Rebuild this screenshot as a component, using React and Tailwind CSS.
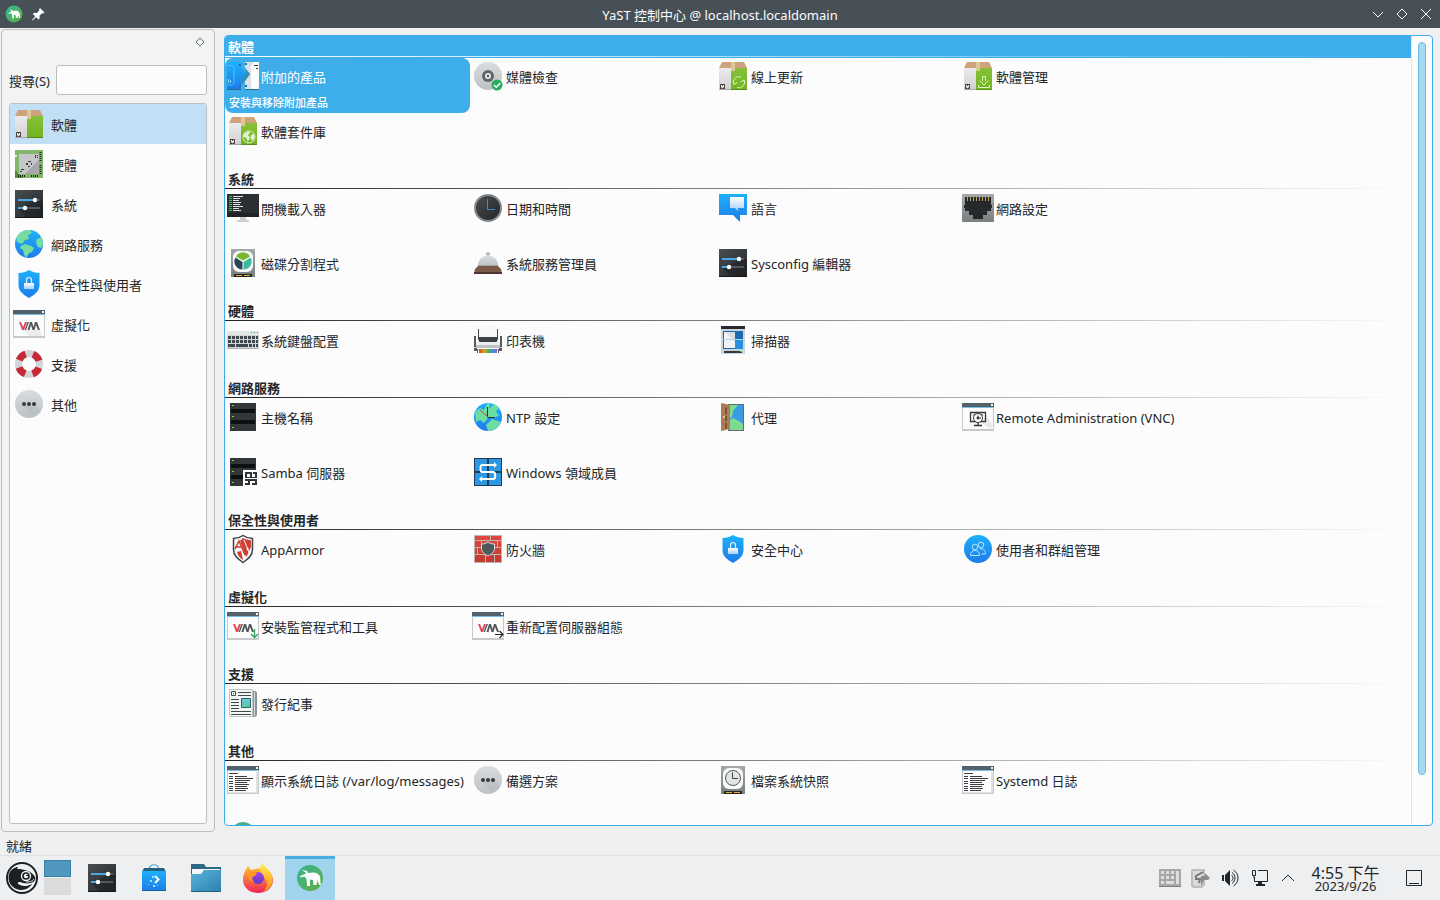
import { useState } from 'react'

const categories = [
  { label: '軟體', icon: PackageIcon },
  { label: '硬體', icon: ChipIcon },
  { label: '系統', icon: SlidersIcon },
  { label: '網路服務', icon: GlobeIcon },
  { label: '保全性與使用者', icon: ShieldIcon },
  { label: '虛擬化', icon: VmIcon },
  { label: '支援', icon: LifebuoyIcon },
  { label: '其他', icon: DotsIcon },
]

const sections = [
  {
    title: '軟體',
    items: [
      { label: '附加的產品', icon: AddonIcon, hint: '安裝與移除附加產品' },
      { label: '媒體檢查', icon: MediaIcon },
      { label: '線上更新', icon: UpdateIcon },
      { label: '軟體管理', icon: InstallIcon },
      { label: '軟體套件庫', icon: RepoIcon },
    ],
  },
  {
    title: '系統',
    items: [
      { label: '開機載入器', icon: BootIcon },
      { label: '日期和時間', icon: ClockIcon },
      { label: '語言', icon: LanguageIcon },
      { label: '網路設定', icon: EthernetIcon },
      { label: '磁碟分割程式', icon: PartitionIcon },
      { label: '系統服務管理員', icon: BellIcon },
      { label: 'Sysconfig 編輯器', icon: SlidersIcon },
    ],
  },
  {
    title: '硬體',
    items: [
      { label: '系統鍵盤配置', icon: KeyboardIcon },
      { label: '印表機', icon: PrinterIcon },
      { label: '掃描器', icon: ScannerIcon },
    ],
  },
  {
    title: '網路服務',
    items: [
      { label: '主機名稱', icon: ServerIcon },
      { label: 'NTP 設定', icon: NtpIcon },
      { label: '代理', icon: ProxyIcon },
      { label: 'Remote Administration (VNC)', icon: VncIcon },
      { label: 'Samba 伺服器', icon: SambaIcon },
      { label: 'Windows 領域成員', icon: DomainIcon },
    ],
  },
  {
    title: '保全性與使用者',
    items: [
      { label: 'AppArmor', icon: ArmorIcon },
      { label: '防火牆', icon: FirewallIcon },
      { label: '安全中心', icon: ShieldIcon },
      { label: '使用者和群組管理', icon: UsersIcon },
    ],
  },
  {
    title: '虛擬化',
    items: [
      { label: '安裝監管程式和工具', icon: VmInstallIcon },
      { label: '重新配置伺服器組態', icon: VmMoveIcon },
    ],
  },
  { title: '支援', items: [{ label: '發行紀事', icon: NewsIcon }] },
  {
    title: '其他',
    items: [
      { label: '顯示系統日誌 (/var/log/messages)', icon: LogIcon },
      { label: '備選方案', icon: DotsIcon },
      { label: '檔案系統快照', icon: SnapshotIcon },
      { label: 'Systemd 日誌', icon: LogIcon },
      { label: 'YaST', icon: YastIcon, iconOnly: true },
    ],
  },
]

export default function App() {
  const [category, setCategory] = useState('軟體')
  const [selected, setSelected] = useState('附加的產品')

  return (
    <div className="flex h-screen flex-col overflow-hidden bg-[#eff0f1] font-['Noto_Sans','Noto_Sans_CJK_TC',sans-serif] text-[13px] leading-5 text-[#232629]">
      <Gradients />
      <TitleBar />
      <div className="flex min-h-0 flex-1">
        <aside className="ml-px mt-px flex w-[214px] shrink-0 flex-col rounded border border-[#bcbec0] bg-[#f2f3f3] px-[7px] pb-[7px]">
          <div className="flex h-[35px] justify-end pr-[2px] pt-[7px]">
            <button aria-label="Float panel" className="h-[10px] w-[10px]">
              <svg viewBox="0 0 10 10" className="h-full w-full" fill="none" stroke="#6b6f72">
                <path d="M5 1l4 4-4 4-4-4z" />
              </svg>
            </button>
          </div>
          <div className="flex items-center gap-[6px]">
            <label htmlFor="search" className="mt-0.5">搜尋(S)</label>
            <input
              id="search"
              type="text"
              className="h-[30px] min-w-0 flex-1 rounded-[3px] border border-[#bcbec0] bg-[#fcfcfc] px-2 outline-none"
            />
          </div>
          <nav className="mt-2 flex-1 rounded-[3px] border border-[#bcbec0] bg-[#fcfcfc]">
            {categories.map(({ label, icon: Icon }) => (
              <button
                key={label}
                onClick={() => setCategory(label)}
                className={`flex h-10 w-full items-center gap-[6px] pl-[3px] text-left ${
                  category === label ? 'bg-[#c2e0f5]' : ''
                }`}
              >
                <Icon />
                <span className="mt-0.5">{label}</span>
              </button>
            ))}
          </nav>
        </aside>

        <main className="mb-[6px] ml-[9px] mr-[7px] mt-[7px] flex min-w-0 flex-1 overflow-hidden rounded border border-[#3daee9] bg-[#fcfcfc]">
          <div className="min-w-0 flex-1 overflow-hidden">
            {sections.map(({ title, items }) => {
              const active = title === category
              return (
                <section key={title}>
                  <div className={active ? 'h-[22px] bg-[#3daee9] text-white' : 'h-[22px]'}>
                    <h2 className="h-5 pl-[3px] pt-px font-bold">{title}</h2>
                    <div
                      className={`h-px bg-linear-to-r to-transparent ${active ? 'from-white' : 'from-[#232629]'}`}
                    />
                  </div>
                  <div className="grid grid-cols-[repeat(auto-fill,245px)]">
                    {items.map((item) => (
                      <Module
                        key={item.label}
                        {...item}
                        selected={selected === item.label}
                        onSelect={() => setSelected(item.label)}
                      />
                    ))}
                  </div>
                </section>
              )
            })}
          </div>
          <div className="flex w-[21px] shrink-0 border-l border-[#e3e5e6] px-[6px] pb-[50px] pt-[6px]">
            <div className="w-2 rounded-full border border-[#6cbfe9] bg-[#a9d8f1]" />
          </div>
        </main>
      </div>
      <div className="h-[23px] shrink-0 px-[6px] pt-1">就緒</div>
      <Taskbar />
    </div>
  )
}

function Module({ label, icon: Icon, hint, iconOnly, selected, onSelect }) {
  return (
    <button
      onClick={onSelect}
      aria-label={iconOnly ? label : undefined}
      className={`flex h-[55px] flex-col overflow-hidden whitespace-nowrap rounded-lg px-[2px] pt-[2px] text-left ${
        selected ? 'bg-[#3daee9] text-white' : ''
      }`}
    >
      <span className="flex h-8 items-center gap-[2px]">
        <Icon />
        {!iconOnly && <span className="mt-0.5">{label}</span>}
      </span>
      {selected && hint && <span className="mt-px px-[2px] text-[11px] font-medium">{hint}</span>}
    </button>
  )
}

function TitleBar() {
  return (
    <header className="grid h-7 shrink-0 grid-cols-[1fr_auto_1fr] items-center bg-[#475057] text-[#fcfcfc]">
      <div className="flex items-center gap-[7px] pl-[5px]">
        <svg viewBox="0 0 32 32" className="h-[18px] w-[18px]">
          <circle cx="16" cy="16" r="15" fill="url(#yast)" />
          <Aardvark />
        </svg>
        <button aria-label="Pin" className="h-4 w-4">
          <svg viewBox="0 0 16 16" className="h-full w-full" fill="#fcfcfc">
            <path d="M10 2l4.500 4.500-1.500 1-1-.3-2.500 2.500.2 2.600L8.500 13.500 6.200 11.200 2.500 14.500 2 14l3.200-3.800L2.800 8 4 6.800l2.800.2 2.500-2.500L9 3.500z" />
          </svg>
        </button>
      </div>
      <h1 className="mt-0.5">YaST 控制中心 @ localhost.localdomain</h1>
      <div className="flex justify-end gap-3 pr-2">
        <button aria-label="Minimize" className="h-3 w-3">
          <WindowGlyph d="M1 4l5 5 5-5" />
        </button>
        <button aria-label="Maximize" className="h-3 w-3">
          <WindowGlyph d="M6 1l5 5-5 5-5-5z" />
        </button>
        <button aria-label="Close" className="h-3 w-3">
          <WindowGlyph d="M1 1l10 10M11 1L1 11" />
        </button>
      </div>
    </header>
  )
}

function WindowGlyph({ d }) {
  return (
    <svg viewBox="0 0 12 12" className="h-full w-full" fill="none" stroke="#fcfcfc">
      <path d={d} />
    </svg>
  )
}

function Taskbar() {
  return (
    <footer className="flex h-[45px] shrink-0 items-stretch border-t border-[#dfe1e2] bg-[#edeff0]">
      <button aria-label="Menu" className="flex w-11 items-center justify-center">
        <ChameleonIcon />
      </button>
      <div className="flex w-[27px] flex-col gap-px pt-1">
        <button aria-label="Desktop 1" className="h-[17px] border border-[#3b7fa6] bg-[#5097bd]" />
        <button aria-label="Desktop 2" className="h-[17px] bg-[#d9dbdc]" />
      </div>
      <div className="ml-[5px] flex">
        <TaskButton label="System Settings"><SlidersIcon /></TaskButton>
        <TaskButton label="Discover"><DiscoverIcon /></TaskButton>
        <TaskButton label="Files"><FolderIcon /></TaskButton>
        <TaskButton label="Firefox"><FirefoxIcon /></TaskButton>
        <button
          aria-label="YaST"
          className="ml-px flex w-[50px] items-center justify-center border-t-3 border-[#4cade3] bg-[#a0d3ec] pb-[3px]"
        >
          <YastIcon />
        </button>
      </div>
      <div className="ml-auto flex items-center pr-[18px]">
        <div className="flex items-center gap-2">
          <svg viewBox="0 0 22 22" className="h-[22px] w-[22px]">
            <path d="M0 2h22v18H0z" fill="#a7a7a7" />
            <path d="M2 4h3v3H2zM7 4h3v3H7zM12 4h3v3h-3zM2 9h3v3H2zM7 9h3v3H7zM12 9h3v3h-3zM2 14h3v3H2zM7 14h8v3H7zM17 4h3v13h-3z" fill="#dedede" />
            <path d="M0 19.500h22" stroke="#7d7d7d" />
          </svg>
          <svg viewBox="0 0 22 22" className="h-[22px] w-[22px]">
            <path d="M3 2h13v16l-3 3H4l-2-2V4z" fill="#bdbdbd" />
            <path d="M4 4h10v12l-2 3H5l-1-1z" fill="#dadada" />
            <path d="M14 5L7 9v3h4l-1 4" fill="none" stroke="#777" strokeWidth="2" />
            <path d="M12 9h4V6l3 3 2 2-2 2h-4l-3 6z" fill="#8d8d8d" />
          </svg>
          <svg viewBox="0 0 22 22" className="h-[22px] w-[22px]" fill="none" stroke="#232629">
            <path d="M3 8h2v6H3zM6 8l5-5v16l-5-5z" fill="#232629" stroke="none" />
            <path d="M12.500 8c2 2 2 4 0 6M13 5.500c4 3 4 8 0 11M14.500 3c6 4 6 12 0 16" />
          </svg>
          <svg viewBox="0 0 22 22" className="h-[22px] w-[22px]" fill="none" stroke="#232629">
            <path d="M9 3.500h9.500v11h-13V10M3.500 3.500h3v5h-3zM5 8.500v3" />
            <path d="M9 15h4v2h3v2H7v-2h2z" fill="#232629" stroke="none" />
          </svg>
        </div>
        <button aria-label="Show hidden icons" className="ml-[6px] h-[22px] w-[22px]">
          <svg viewBox="0 0 22 22" className="h-full w-full" fill="none" stroke="#232629">
            <path d="M5 14l6-6 6 6" />
          </svg>
        </button>
        <div className="ml-2 flex w-[77px] flex-col items-center pt-[2px]">
          <span className="text-[16px] leading-[14px]">4:55 下午</span>
          <span className="text-[13px] leading-[12px]">2023/9/26</span>
        </div>
        <button aria-label="Show desktop" className="ml-[22px] h-4 w-4">
          <svg viewBox="0 0 16 16" className="h-full w-full" fill="none" stroke="#232629">
            <path d="M.5.5h15v15H.5zM3 13.500h10" />
          </svg>
        </button>
      </div>
    </footer>
  )
}

function TaskButton({ label, children }) {
  return (
    <button aria-label={label} className="flex w-[52px] items-center justify-center">
      {children}
    </button>
  )
}

/* Icons, all on a 32px grid */

function Svg({ children }) {
  return (
    <svg viewBox="0 0 32 32" className="h-8 w-8 shrink-0">
      {children}
    </svg>
  )
}

function Gradient({ id, from, to, diagonal }) {
  return (
    <linearGradient id={id} x1="0" y1="0" x2={diagonal ? '1' : '0'} y2="1">
      <stop offset="0" stopColor={from} />
      <stop offset="1" stopColor={to} />
    </linearGradient>
  )
}

function Gradients() {
  return (
    <svg className="absolute h-0 w-0" aria-hidden="true">
      <defs>
        <Gradient id="blue" from="#1eb1fa" to="#1f7bea" />
        <Gradient id="green" from="#86c138" to="#70b41f" />
        <Gradient id="box" from="#ebebed" to="#d0d0d2" />
        <Gradient id="dark" from="#4a4e52" to="#222528" diagonal />
        <Gradient id="grey" from="#d9dddf" to="#bcc1c4" />
        <Gradient id="white" from="#ffffff" to="#a9cdf8" />
        <Gradient id="disk" from="#a3a8a9" to="#7a7f80" />
        <Gradient id="red" from="#e3483d" to="#bf3a30" />
        <Gradient id="yast" from="#36b597" to="#5fae41" diagonal />
        <Gradient id="news" from="#6fc7e2" to="#57c6a1" />
        <Gradient id="folder" from="#57b4dd" to="#2e80ae" diagonal />
        <Gradient id="fox" from="#ffc42b" to="#ee2159" />
        <Gradient id="foxTail" from="#fff14d" to="#ff8a1c" />
        <Gradient id="foxCore" from="#a742e8" to="#5b3bc4" />
        <linearGradient id="rainbow">
          <stop offset="0" stopColor="#d8452b" />
          <stop offset=".3" stopColor="#d8a522" />
          <stop offset=".5" stopColor="#43b649" />
          <stop offset=".75" stopColor="#4394d8" />
          <stop offset="1" stopColor="#8f5cc0" />
        </linearGradient>
      </defs>
    </svg>
  )
}

function Box() {
  return (
    <>
      <path d="M2 8h12v22H2z" fill="url(#box)" />
      <path d="M14 8h16v22H14z" fill="url(#green)" />
      <path d="M5 2h22l3 6H2z" fill="#cda27c" />
      <path d="M14 2h4v9h-4z" fill="#dcc893" />
      <path d="M2 29h28v1H2z" fill="#000" opacity=".2" />
      <path d="M3 24h5v5H3z" fill="#4e453c" />
      <path d="M4 25h3v2l-1.500 1.500L4 27z" fill="#eee" />
      <path d="M5 25h1v1H5z" fill="#4e453c" />
    </>
  )
}

function PackageIcon() {
  return <Svg><Box /></Svg>
}

function UpdateIcon() {
  return (
    <Svg>
      <Box />
      <g fill="none" stroke="#d9f0ba">
        <path d="M17 24.500a5.500 5.500 0 017-7.500M27 20a5.500 5.500 0 01-7 7.500M16 20.500l1 4 3.500-2M28 24l-1-4-3.500 2" />
      </g>
    </Svg>
  )
}

function InstallIcon() {
  return (
    <Svg>
      <Box />
      <path d="M20.500 21v-4.500h3V21M17.500 20.500l4.500 4.500 4.500-4.500M16.500 25v2.500h11V25" fill="none" stroke="#e1f3c9" />
    </Svg>
  )
}

function RepoIcon() {
  return (
    <Svg>
      <Box />
      <circle cx="22" cy="22" r="6" fill="none" stroke="#e5f1d7" />
      <path d="M17 19l4-2.500 2 1-2 3 2 1.500-1 3-1.500 1.500-1-3-3-2zM24 20l3-1 .5 4-2.500 3-1.500-3z" fill="#e5f1d7" />
    </Svg>
  )
}

function AddonIcon() {
  return (
    <Svg>
      <path d="M0 2h14v5l5 7-5 6v10H0z" fill="url(#blue)" />
      <path d="M0 29h14v1H0zM18 29h14v1H18z" fill="#276e87" />
      <path d="M18 2h14v27H18v-8l5-7-5-6z" fill="#dbe2e5" />
      <path d="M26 4l-2 3v20l2 2h6V2h-6z" fill="#fcfcfc" />
      <path d="M18 8l5 6-5 7-4 4v-5l5-6z" fill="#3490b0" />
      <path d="M18 3h2v2h-2zM18 25h2v2h-2zM12 4h2v2h-2zM12 25h2v2h-2z" fill="#26709a" />
      <path d="M27 5.500h4M29 8.500h2" stroke="#333" />
      <path d="M0 5.500h4c2 0 3 1 3 3V22c0 2-1 3-3 3H0" fill="none" stroke="#45c5ff" />
      <path d="M1.500 19v4M3.500 20v3" stroke="#8fdcff" />
    </Svg>
  )
}

function MediaIcon() {
  return (
    <Svg>
      <circle cx="16" cy="16" r="14" fill="url(#grey)" />
      <circle cx="16" cy="16" r="6" fill="#5e666c" />
      <circle cx="16" cy="16" r="3" fill="#e8eaeb" />
      <circle cx="16" cy="16" r="1.200" fill="#4c5257" />
      <circle cx="25" cy="25" r="5.500" fill="#27ae60" />
      <path d="M22 25l2.200 2.200 4-4" fill="none" stroke="#fff" strokeWidth="1.500" />
    </Svg>
  )
}

function ChipIcon() {
  return (
    <Svg>
      <path d="M2 2h28v28H2z" fill="#82b76b" />
      <path d="M2 22l8 8H2z" fill="#568a3f" />
      <path d="M6 6h20v20H6z" fill="#c4c7c9" />
      <path d="M26 12v14H12z" fill="#a4a8aa" />
      <path d="M27.500 4v9M27.500 17v9" stroke="#20251f" strokeWidth="2" strokeDasharray="1 1" />
      <path d="M5 28h8M18 28h8" stroke="#20251f" strokeWidth="2" strokeDasharray="1 1" />
      <path d="M13 15h2v2h-2zM15 13h3v1h-3zM18 15h1v2h-1zM15 18h2v1h-2zM22 7h1v3h-1zM24 7h1v1h-1zM24 9h1v1h-1zM8 21h3v1H8zM7 23h2v1H7z" fill="#35393b" />
      <path d="M2 7h2v2H2z" fill="#dff0d5" />
    </Svg>
  )
}

function SlidersIcon() {
  return (
    <Svg>
      <path d="M2 2h28v28H2z" fill="url(#dark)" />
      <path d="M5 21l9 9h16V14l-4-3z" fill="#1a1c1f" opacity=".45" />
      <path d="M20 12h7M12 20h15" stroke="#54585c" strokeWidth="2" />
      <path d="M5 12h17M5 20h7" stroke="#48a8df" strokeWidth="2" />
      <circle cx="22" cy="12" r="2.200" fill="#fff" />
      <circle cx="12" cy="20" r="2.200" fill="#fff" />
      <path d="M2 29h28v1H2z" fill="#15171a" />
    </Svg>
  )
}

function GlobeIcon() {
  return (
    <Svg>
      <circle cx="16" cy="16" r="14" fill="url(#blue)" />
      <path d="M3.500 10A14 14 0 0117 2l2 3-4 2 1 4-4 1-3 4-5-2zM8 18l4-2 6 2 3 2-2 4-3 1-3 5-2-4-1-4-3-2zM27 8a14 14 0 013 8l-2 4-3-1-2-4 1-4 3-1z" fill="#75dda0" />
    </Svg>
  )
}

function NtpIcon() {
  return (
    <Svg>
      <circle cx="16" cy="16" r="14" fill="url(#blue)" />
      <path d="M3 11l5-4 4 2 3-6 3-1-1 6 5-5 5 3-3 5 3 3-4 3-6-1-5 6-4-3-4 2zM14 24l6-6 9 3a14 14 0 01-13 9z" fill="#6cdda4" />
      <path d="M15.500 6v10.500H23" fill="none" stroke="#1f3940" />
      <path d="M8 9l8 7" stroke="#c74735" />
    </Svg>
  )
}

function ShieldIcon() {
  return (
    <Svg>
      <path d="M16 2c3 2 7 3 10.500 3v12c0 6-4 9-10.500 13C9.500 26 5.500 23 5.500 17V5C9 5 13 4 16 2z" fill="url(#blue)" />
      <path d="M13.500 15v-3a2.500 2.500 0 015 0v3" fill="none" stroke="#e5f3ff" strokeWidth="1.200" />
      <path d="M11 15h10v6H11z" fill="url(#white)" />
    </Svg>
  )
}

function WindowFrame() {
  return (
    <>
      <path d="M0 2h32v28H0z" fill="#c5cacc" />
      <path d="M1 7h30v21H1z" fill="#fcfcfc" />
      <path d="M0 2h32v4H0z" fill="#54616b" />
      <path d="M0 6h32v1H0z" fill="#75bfe4" />
      <path d="M29 3h2v2h-2z" fill="#f2f2f2" />
    </>
  )
}

function VmMark() {
  return (
    <>
      <path d="M6 14h2l2 5 2-5h2l-3 8H9z" fill="#e0495b" />
      <path d="M14.500 14h1.500l-3 8h-1.500zM17 14h2l1.500 5L22 14h2l3 8h-2l-2-5-1.500 5h-2L18 17l-1.500 5h-2z" fill="#54585c" />
    </>
  )
}

function VmIcon() {
  return (
    <Svg>
      <WindowFrame />
      <path d="M10 22l17 0 2 6H16z" fill="#ececec" />
      <VmMark />
    </Svg>
  )
}

function VmInstallIcon() {
  return (
    <Svg>
      <WindowFrame />
      <VmMark />
      <path d="M27.500 19v8M24 24l3.500 3.500L31 24" fill="none" stroke="#35a365" strokeWidth="1.300" />
    </Svg>
  )
}

function VmMoveIcon() {
  return (
    <Svg>
      <WindowFrame />
      <VmMark />
      <path d="M23 24.500h8M27.500 21l3.500 3.500-3.500 3.500" fill="none" stroke="#232629" strokeWidth="1.200" />
    </Svg>
  )
}

function LifebuoyIcon() {
  return (
    <Svg>
      <circle cx="16" cy="16" r="10.500" fill="none" stroke="#d2d5d7" strokeWidth="7" />
      <circle cx="16" cy="16" r="10.500" fill="none" stroke="#c7283a" strokeWidth="7" strokeDasharray="9 7.490" strokeDashoffset="-3.750" />
    </Svg>
  )
}

function DotsIcon() {
  return (
    <Svg>
      <circle cx="16" cy="16" r="14" fill="url(#grey)" />
      <path d="M10 18l10 10 8-5-5-7z" fill="#a9aeb2" opacity=".3" />
      <circle cx="11" cy="16" r="2" fill="#363a3e" />
      <circle cx="16" cy="16" r="2" fill="#363a3e" />
      <circle cx="21" cy="16" r="2" fill="#363a3e" />
    </Svg>
  )
}

function BootIcon() {
  return (
    <Svg>
      <path d="M13 24h6v4h3v2H10v-2h3z" fill="#ccd0d3" />
      <path d="M0 2h32v23H0z" fill="#2b2f33" />
      <path d="M0 21h32v4H0z" fill="#202326" />
      <path d="M2 4.500h3M2 6.500h3M2 8.500h3M2 10.500h3M2 12.500h3M2 14.500h3M2 16.500h3M2 18.500h3" stroke="#35c34a" />
      <path d="M6 4.500h10M6 6.500h7M6 8.500h6M6 10.500h8M6 12.500h7M6 14.500h10M6 16.500h6M6 18.500h8" stroke="#e0e2e3" />
    </Svg>
  )
}

function ClockIcon() {
  return (
    <Svg>
      <circle cx="16" cy="16" r="13" fill="url(#dark)" stroke="#868b8f" strokeWidth="2" />
      <path d="M15.500 7v10.500H23" fill="none" stroke="#3490d0" />
    </Svg>
  )
}

function LanguageIcon() {
  return (
    <Svg>
      <path d="M2 2h28v21h-7v7l-7-7H2z" fill="url(#blue)" />
      <path d="M13 5h14v11h-6v3l-3-3h-5z" fill="url(#white)" />
    </Svg>
  )
}

function EthernetIcon() {
  return (
    <Svg>
      <rect y="2" width="32" height="28" rx="1" fill="url(#disk)" />
      <path d="M3 5h26v14h-4v4h-4v4H11v-4H7v-4H3z" fill="#26292b" />
      <path d="M5.500 5v4M8.500 5v4M11.500 5v4M14.500 5v4M17.500 5v4M20.500 5v4M23.500 5v4M26.500 5v4" stroke="#c1a55a" />
      <path d="M2 13h1v3H2zM29 13h1v3h-1z" fill="#26292b" />
    </Svg>
  )
}

function Disk() {
  return (
    <>
      <path d="M4 2h24v28H4z" fill="url(#disk)" />
      <rect x="6" y="4" width="20" height="21" rx="6" fill="#fafafa" />
      <path d="M7 27h18v3H7z" fill="#25282a" />
      <path d="M9 28.500h6M17 28.500h6" stroke="#e4ae35" />
    </>
  )
}

function PartitionIcon() {
  return (
    <Svg>
      <Disk />
      <path d="M9 9.500a8 8 0 0114 0l-7 4z" fill="#7ab62e" />
      <path d="M8.500 10.500L15.500 15v7.500a8 8 0 01-7-12z" fill="#28455a" />
      <path d="M23.500 10.500L16.500 15v7.500a8 8 0 007-12z" fill="#3fb99c" />
    </Svg>
  )
}

function SnapshotIcon() {
  return (
    <Svg>
      <Disk />
      <circle cx="16" cy="14" r="7.500" fill="#e3e5e6" stroke="#54585b" />
      <path d="M15.500 8.500v6H21" fill="none" stroke="#3c4043" />
    </Svg>
  )
}

function BellIcon() {
  return (
    <Svg>
      <circle cx="16" cy="7" r="2" fill="#b3b8bb" />
      <path d="M6 19c0-14 20-14 20 0z" fill="url(#grey)" />
      <path d="M6 18h20v1.500H6z" fill="#a0a5a8" />
      <path d="M6 19h20l3 3 1 5H2l1-5z" fill="#7c5a4a" />
      <path d="M2 25h28v2H2z" fill="#4e372e" />
    </Svg>
  )
}

function KeyboardIcon() {
  return (
    <Svg>
      <path d="M0 7h32v18H0z" fill="#d0d5d7" />
      <path d="M0 7h32v4H0z" fill="#e1e6e7" />
      <path d="M1 13.500h30M1 17.500h30" stroke="#40474c" strokeWidth="3" strokeDasharray="3 1" />
      <path d="M1 21.500h7M9 21.500h12M22 21.500h3M26 21.500h2M29 21.500h2" stroke="#40474c" strokeWidth="3" />
      <path d="M24 8.500h1M27 8.500h1M30 8.500h1" stroke="#2aa678" />
      <path d="M0 24.500h32" stroke="#aab0b3" />
    </Svg>
  )
}

function PrinterIcon() {
  return (
    <Svg>
      <path d="M6 2h20v14H6z" fill="#f8f8f8" />
      <path d="M6.500 5v11M25.500 5v11" stroke="#44494d" />
      <path d="M2 12h2v6h24v-6h2v12H2z" fill="#bec3c7" />
      <path d="M2 12h2v11H2zM28 12h2v11h-2z" fill="#52595f" />
      <path d="M7 13h18v5H7z" fill="#3a4046" />
      <path d="M4 18h24v3H4z" fill="#eceeef" />
      <path d="M2 25h28v2H2z" fill="#e0e3e5" />
      <path d="M2 24h3v3H2zM27 24h3v3h-3z" fill="#555b60" />
      <path d="M7 25h18v4H7z" fill="url(#rainbow)" />
      <path d="M5.500 25v4M26.500 25v4" stroke="#555b60" />
    </Svg>
  )
}

function ScannerIcon() {
  return (
    <Svg>
      <path d="M4 2h24v28H4z" fill="#c9d5de" />
      <path d="M4 2h24v3H4z" fill="#232a31" />
      <path d="M6 7h20v18H6z" fill="#1e69ad" />
      <path d="M18 15h8v10h-8z" fill="#2b8fe0" />
      <path d="M7 8h11v16H7z" fill="#f1f2f3" />
      <path d="M8 8h10v10z" fill="#dcdee0" />
      <path d="M5 15.500h22" stroke="#a7d7f4" />
      <path d="M7 27h18v2H7z" fill="#323a40" />
      <path d="M23 27h2v1h-2z" fill="#51c552" />
    </Svg>
  )
}

function Server() {
  return (
    <>
      <path d="M3 2h26v28H3z" fill="#33373a" />
      <path d="M4 8h24v4H4zM4 19h24v4H4z" fill="#0d0f10" />
      <path d="M5 4h2v1H5zM5 15h2v1H5zM5 26h2v1H5z" fill="#7bd42a" />
    </>
  )
}

function ServerIcon() {
  return <Svg><Server /></Svg>
}

function SambaIcon() {
  return (
    <Svg>
      <Server />
      <path d="M16 14h15v16H16z" fill="#fcfcfc" />
      <path d="M18 16h5v2h-3v3h3v-5h2v5h3v-3h-2v-2h4v6H18zM18 23h12v2h-5v2h3v-2h2v4h-5v-4h-2v4h-5v-2h3v-2h-3z" fill="#303436" />
    </Svg>
  )
}

function ProxyIcon() {
  return (
    <Svg>
      <path d="M11 3h16v27H11z" fill="#5f6d6c" />
      <path d="M12 4h14v25H12z" fill="#3b9be0" />
      <path d="M12 4h9l-5 6-1 6-3 2zM12 20l4-3 6 3 4 3v6H12z" fill="#7ddb91" />
      <path d="M4 2l9 2v24l-9 2z" fill="#ae7c54" />
      <path d="M8 6l2 1v6H8zM8 15h2v5H8zM8 22h2v5l-2 1z" fill="#7c5334" />
      <circle cx="7" cy="16" r="1" fill="#e8d5b8" />
    </Svg>
  )
}

function VncIcon() {
  return (
    <Svg>
      <WindowFrame />
      <path d="M20 22l8 6 3-4-7-10z" fill="#ebebeb" />
      <path d="M8.500 11.500h15v9h-15zM16 21v3M12 24.500h8" fill="none" stroke="#35393c" strokeWidth="1.300" />
      <circle cx="16" cy="17" r="4.500" fill="#fcfcfc" stroke="#35393c" />
      <path d="M16 14.500V17h3M11 14.500l2-2M21 14.500l-2-2" fill="none" stroke="#35393c" />
      <circle cx="16" cy="17" r="1.500" fill="#35393c" />
    </Svg>
  )
}

function DomainIcon() {
  return (
    <Svg>
      <path d="M2 2h28v28H2z" fill="#1d3c54" />
      <path d="M3 3h12v12H3zM17 3h12v12H17zM3 17h12v12H3zM17 17h12v12H17z" fill="#2c98e4" />
      <path d="M23 9H10c-2 0-2 7 0 7h11c3 0 3 7 0 7H9" fill="none" stroke="#fff" strokeWidth="2" />
      <path d="M22 6l3 3-3 3zM10 20l-3 3 3 3z" fill="#fff" />
    </Svg>
  )
}

function ArmorIcon() {
  return (
    <Svg>
      <path d="M16 2.500c3 2 6 3 9.500 3v11c0 6-4 9-9.500 13-5.500-4-9.500-7-9.500-13v-11c3.500 0 6.500-1 9.500-3z" fill="#f5f5f5" stroke="#3b4348" strokeWidth="1.500" />
      <path d="M16 5c3 1.500 5 2 8 2.300V14h-6l3 7-2 3-6-16zM10 19l4-1 2 9c-3-2-5-4-6-8z" fill="#d03f33" />
      <path d="M8 16l4-8 6 14M8 14h6M18 14.500h5l-2.500 5z" fill="none" stroke="#d03f33" strokeWidth="1.500" />
      <path d="M17 7l5 12" fill="none" stroke="#fff" />
    </Svg>
  )
}

function FirewallIcon() {
  return (
    <Svg>
      <path d="M2 2h28v28H2z" fill="url(#red)" />
      <path d="M2 7.500h28M2 14.500h28M2 21.500h28M2 2.500h28M2 29.500h28M18.500 2v6M9.500 8v7M25.500 8v7M5.500 15v7M13.500 22v8M22.500 22v8M2.500 2v28M29.500 2v28" stroke="#bcb7b5" />
      <path d="M16 9c2 1.500 4 2 6.500 2v4c0 4-3 6-6.500 8-3.500-2-6.500-4-6.500-8v-4c2.500 0 4.500-.5 6.500-2z" fill="#4e595a" stroke="#d8dedb" />
    </Svg>
  )
}

function UsersIcon() {
  return (
    <Svg>
      <circle cx="16" cy="16" r="14" fill="url(#blue)" />
      <g fill="none" stroke="#b9e2ff">
        <circle cx="13" cy="14" r="2.800" />
        <path d="M8.500 22.500c0-7 9-7 9 0z" />
        <circle cx="19" cy="12" r="2.800" />
        <path d="M18 16c3-1 5.500 1 5.500 5h-4" />
      </g>
    </Svg>
  )
}

function NewsIcon() {
  return (
    <Svg>
      <path d="M25 4h3c1 0 2 1 2 2v21c0 2-1 3-3 3h-3z" fill="#8d9295" />
      <path d="M27.500 5v24" stroke="#d7dadb" />
      <path d="M2 2h24v28H4c-1 0-2-1-2-2z" fill="#bfc4c6" />
      <path d="M3 3h22v26H4l-1-1z" fill="#f4f5f5" />
      <path d="M4.500 4.500h4v4h-4zM6 6l1 1" fill="none" stroke="#42474a" />
      <path d="M11 5.500h13M11 8.500h13M4 12.500h8M4 15.500h8M4 18.500h8M4 21.500h8M4 24.500h20M4 27.500h20" stroke="#42474a" />
      <path d="M14.500 11.500h9v9h-9z" fill="url(#news)" stroke="#2a6666" />
    </Svg>
  )
}

function LogIcon() {
  return (
    <Svg>
      <WindowFrame />
      <path d="M1 28h30v1H1zM29 8h2v20h-2z" fill="#dfe2e4" />
      <path d="M2 9.500h9M2 12.500h4M2 14.500h4M2 17.500h4M2 19.500h4M2 22.500h4M2 24.500h4M2 26.500h4M8 12.500h12M8 14.500h18M8 16.500h15M8 18.500h12M8 20.500h14M8 22.500h12M8 24.500h13M8 26.500h11" stroke="#3b3f43" />
    </Svg>
  )
}

function Aardvark() {
  return (
    <path
      d="M6 14l5-2 1-1-4-3 5 1 1 2c5-1 9-1 11 2 2 2 1 6 2 10h-2l-1.500-5-1 5h-3l-.5-5-3-.5V24h-3l-.5-7-2-2.500-4 1z"
      fill="#fcfcfc"
    />
  )
}

function YastIcon() {
  return (
    <Svg>
      <circle cx="16" cy="16" r="13" fill="url(#yast)" />
      <Aardvark />
    </Svg>
  )
}

function ChameleonIcon() {
  return (
    <Svg>
      <circle cx="16" cy="16" r="15" fill="#eff0f1" stroke="#1d2023" strokeWidth="2" />
      <path d="M3 12c2-5 6-7 9-7l-1 2c7 0 15 2 18 8 1 3-1 5-4 6-5 1-8 0-11-1-3 0-3 2 0 3 4 2 8 1 12-1-3 5-8 6-12 6C6 27 1 20 3 12z" fill="#1d2023" />
      <circle cx="20" cy="14" r="4.500" fill="none" stroke="#f2f3f3" strokeWidth="1.300" />
      <circle cx="20" cy="14" r="2.200" fill="#f2f3f3" />
      <path d="M20 13h3v1h-3z" fill="#1d2023" />
      <path d="M20 20c3 0 6 0 8-3" stroke="#eff0f1" fill="none" />
    </Svg>
  )
}

function DiscoverIcon() {
  return (
    <Svg>
      <path d="M11 8c0-7 10-7 10 0" fill="none" stroke="#4aa8dd" strokeWidth="1.200" />
      <path d="M6 6h20l2 4H4z" fill="#26627e" />
      <path d="M4 9h24v20H4z" fill="url(#blue)" />
      <path d="M17 14l3.500 3.500L17 21" fill="none" stroke="#fff" strokeWidth="2" />
      <path d="M14 14h2v2h-2zM12 18h2v2h-2zM15 23h2v2h-2zM10 22h1v1h-1zM19 23h1v1h-1z" fill="#a6e0ff" />
      <path d="M4 28h24v1H4z" fill="#17619a" />
    </Svg>
  )
}

function FolderIcon() {
  return (
    <Svg>
      <path d="M1 2h13l2 3h15v12H1z" fill="#2d6886" />
      <path d="M2 7h28v9H2z" fill="#f5f7f8" />
      <path d="M1 12h10l3-4h17v22H1z" fill="url(#folder)" />
      <path d="M1 29h30v1H1z" fill="#22607f" />
    </Svg>
  )
}

function FirefoxIcon() {
  return (
    <Svg>
      <path d="M2 12c1-4 3-6 4-8l3 4 4-1 6-1 3 2 6 2c3 4 4 8 2 13-2 5-8 8-14 8C7 31 1 25 1 18c0-2 0-4 1-6z" fill="url(#fox)" />
      <path d="M20 1c2 4 8 6 10 13 2 8-3 14-9 16 5-5 5-11 1-15-3-3-6-7-2-14z" fill="url(#foxTail)" />
      <circle cx="16" cy="16" r="6" fill="url(#foxCore)" />
      <path d="M6 10c3-2 6-1 9 1l-2 3c-4 0-3 4-1 6-5-1-7-5-6-10z" fill="#ff9526" />
    </Svg>
  )
}
